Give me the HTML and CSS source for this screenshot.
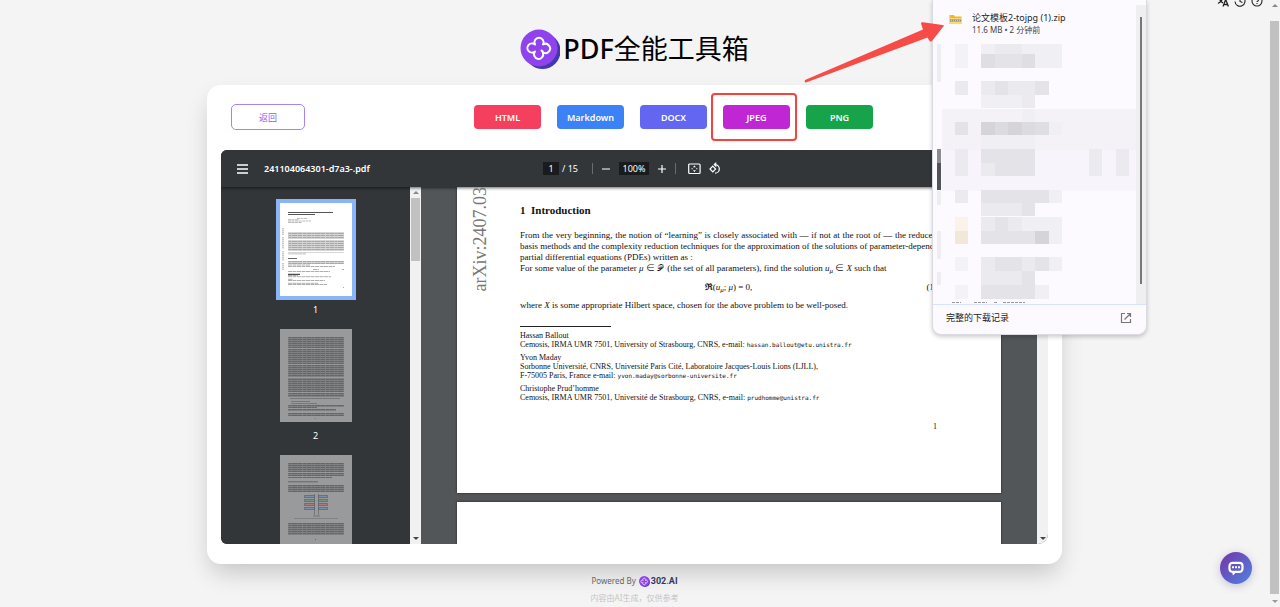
FILE: index.html
```html
<!DOCTYPE html>
<html lang="zh-CN">
<head>
<meta charset="utf-8">
<meta name="viewport" content="width=device-width, initial-scale=1">
<title>PDF全能工具箱</title>
<link rel="stylesheet" href="styles.css">
</head>
<body>
<svg class="defs" width="0" height="0" aria-hidden="true">
  <defs>
    <pattern id="rows" width="23" height="2" patternUnits="userSpaceOnUse">
      <rect width="23" height="2" fill="#000" opacity=".16"/>
      <path d="M0 .5h3m.5 0h5m.6 0h2m.5 0h6m.5 0h4" stroke="#000" stroke-opacity=".22"/>
    </pattern>
  </defs>
</svg>
<div class="page">
  <div class="content">
    <header class="header">
      <svg class="logo" viewBox="0 0 40 40" aria-hidden="true">
        <circle cx="22.500" cy="22" r="18" fill="#4339ac"/>
        <circle cx="19" cy="19" r="18.500" fill="#8f43ee"/>
        <path d="M15 15.500a4.600 4.600 0 1 1 8 0a4.600 4.600 0 1 1-.5 7.500M15 15.500a4.600 4.600 0 1 0 0 7a4.600 4.600 0 1 0 8 1.500c0-1-.5-2-1.500-2.500" fill="none" stroke="#fff" stroke-width="2" stroke-linecap="round" stroke-linejoin="round"/>
      </svg>
      <h1 class="title"><span class="title-latin">PDF</span>全能工具箱</h1>
    </header>

    <main class="card">
      <div class="actions">
        <button class="back" type="button">返回</button>
        <div class="formats">
          <button class="format format-html" type="button">HTML</button>
          <button class="format format-md" type="button">Markdown</button>
          <button class="format format-docx" type="button">DOCX</button>
          <button class="format format-jpeg" type="button">JPEG</button>
          <button class="format format-png" type="button">PNG</button>
        </div>
      </div>

      <section class="viewer">
        <div class="toolbar">
          <div class="file">
            <button class="tool" type="button" aria-label="菜单"><svg width="12" height="10" viewBox="0 0 12 10"><path d="M0 1h11M0 5h11M0 9h11" stroke="#fff" stroke-width="1.500"/></svg></button>
            <span class="filename">241104064301-d7a3-.pdf</span>
          </div>
          <div class="controls">
            <input class="field field-page" type="text" value="1" aria-label="页码"><span class="total">/ 15</span>
            <span class="divider"></span>
            <button class="tool" type="button" aria-label="缩小"><svg width="10" height="10" viewBox="0 0 10 10"><path d="M1 5h8" stroke="#fff" stroke-width="1.200"/></svg></button>
            <input class="field field-zoom" type="text" value="100%" aria-label="缩放">
            <button class="tool" type="button" aria-label="放大"><svg width="10" height="10" viewBox="0 0 10 10"><path d="M1 5h8M5 1v8" stroke="#fff" stroke-width="1.200"/></svg></button>
            <span class="divider divider-tight"></span>
            <button class="tool tool-fit" type="button" aria-label="适合页面"><svg width="13" height="12" viewBox="0 0 13 12"><rect x=".7" y="1" width="11.400" height="9.500" rx="1" fill="none" stroke="#fff" stroke-width="1.200"/><path d="M6.400 2.500l1.500 1.700H4.900zM6.400 9l1.500-1.700H4.900zM3.500 5.200h1.200v1.100H3.500zM8.200 5.200h1.200v1.100H8.200z" fill="#fff"/></svg></button>
            <button class="tool" type="button" aria-label="旋转"><svg width="13" height="13" viewBox="0 0 13 13" fill="none" stroke="#fff" stroke-width="1.200"><path d="M3.800 4.200L6.600 7 3.800 9.800 1 7z"/><path d="M6 2.600a4.300 4.300 0 1 1 0 8.600M7.300.6L5.300 2.600l2 2"/></svg></button>
          </div>
          <span></span>
        </div>

        <div class="panes">
          <div class="thumbs">
            <figure class="thumb">
              <svg class="sheet sheet-current" viewBox="0 0 72 93" aria-hidden="true">
                <g fill="#555"><rect x="8" y="9" width="45" height="1"/><rect x="8" y="11" width="27" height="1"/></g>
                <path d="M17 15.500h10M8 16.700h11M8 18h23M8 19.500h14" stroke="#aaa" stroke-width=".8" stroke-dasharray="3 .5"/>
                <g fill="url(#rows)"><rect x="8" y="29" width="56" height="7"/><rect x="8" y="37" width="56" height="11"/><rect x="8" y="49" width="56" height="1"/><rect x="8" y="50.500" width="18" height="1"/><rect x="8" y="58" width="56" height="3"/></g>
                <path d="M8 55.500h9" stroke="#666"/>
                <path d="M8 62h22M8 63.500h47M33 66.500h6M62 66.500h2M8 68.500h42M8 72.500h10M8 73.700h43M8 76.300h5M8 77.500h37M8 80.300h30M8 81.500h39M63 84.500h1" stroke="#999" stroke-width=".8" stroke-dasharray="4 .5"/>
                <path d="M8 71.300h12" stroke="#222" stroke-width="1"/>
                <path d="M3 25v7m0 2v12m0 2v10m0 2v7" stroke="#bbb" stroke-width="1.500" stroke-dasharray="1.500 .5"/>
              </svg>
              <figcaption class="thumb-label">1</figcaption>
            </figure>
            <figure class="thumb">
              <svg class="sheet sheet-dim" viewBox="0 0 72 93" aria-hidden="true">
                <g fill="url(#rows)"><rect x="8" y="8" width="56" height="11"/><rect x="8" y="20" width="56" height="15"/><rect x="8" y="36" width="56" height="12"/><rect x="8" y="49" width="56" height="14"/><rect x="8" y="64" width="56" height="4"/><rect x="8" y="76" width="56" height="2"/><rect x="8" y="78" width="29" height="1"/><rect x="8" y="80" width="48" height="2"/><rect x="8" y="84" width="56" height="3"/></g>
                <path d="M10 69.500h50M11 72.500h19M11 74.500h26M35 89.500h1" stroke="#777"/>
              </svg>
              <figcaption class="thumb-label">2</figcaption>
            </figure>
            <figure class="thumb">
              <svg class="sheet sheet-dim" viewBox="0 0 72 93" role="img" aria-label="第三页">
                <g fill="url(#rows)"><rect x="8" y="8" width="56" height="9"/><rect x="8" y="18" width="56" height="3"/><rect x="8" y="22" width="44" height="1"/><rect x="8" y="30" width="56" height="7"/><rect x="14" y="63" width="44" height="1"/><rect x="8" y="68" width="56" height="12"/></g>
                <path d="M8 26.800h30" stroke="#666"/>
                <g stroke="#5b6066" stroke-width=".7"><path d="M24.500 40.500h10v2h-10zM38.500 40.500h9v2h-9z" fill="#7d8fa8"/><path d="M24.500 44.500h10v2h-10zM38.500 44.500h9v2h-9z" fill="#7c9484"/><path d="M24.500 48.500h10v2h-10zM38.500 48.500h9v2h-9z" fill="#a67c80"/><path d="M24.500 52.500h10v2h-10zM38.500 52.500h9v2h-9z" fill="#7d8fa8"/><path d="M34.500 39v21M38.500 39v21M33 61h7" fill="none" stroke-width=".6"/></g>
                <path d="M35 84.500h1" stroke="#666"/>
              </svg>
            </figure>
          </div>
          <div class="scrollbar" aria-hidden="true"><span class="arrow arrow-up"></span><span class="bar bar-thumbs"></span><span class="arrow arrow-down"></span></div>

          <div class="document">
            <article class="paper">
              <p class="stamp">arXiv:2407.03</p>
              <div class="text">
                <h2 class="section">1&nbsp; Introduction</h2>
                <p class="line line-full">From the very beginning, the notion of “learning” is closely associated with — if not at the root of — the reduced</p>
                <p class="line line-full">basis methods and the complexity reduction techniques for the approximation of the solutions of parameter-dependant</p>
                <p class="line">partial differential equations (PDEs) written as :</p>
                <p class="line">For some value of the parameter <i>μ</i> ∈ <span class="script">𝒫</span> (the set of all parameters), find the solution <i>u<sub>μ</sub></i> ∈ <i>X</i> such that</p>
                <p class="equation"><span></span><span><b>ℜ</b>(<i>u<sub>μ</sub></i>; <i>μ</i>) = 0,</span><span class="number">(1)</span></p>
                <p class="line">where <i>X</i> is some appropriate Hilbert space, chosen for the above problem to be well-posed.</p>
                <hr class="rule">
                <p class="note">Hassan Ballout<br>Cemosis, IRMA UMR 7501, University of Strasbourg, CNRS, e-mail: <span class="mail">hassan.ballout@etu.unistra.fr</span></p>
                <p class="note">Yvon Maday<br>Sorbonne Université, CNRS, Université Paris Cité, Laboratoire Jacques-Louis Lions (LJLL),<br>F-75005 Paris, France e-mail: <span class="mail">yvon.maday@sorbonne-universite.fr</span></p>
                <p class="note">Christophe Prud’homme<br>Cemosis, IRMA UMR 7501, Université de Strasbourg, CNRS, e-mail: <span class="mail">prudhomme@unistra.fr</span></p>
                <p class="folio">1</p>
              </div>
            </article>
            <article class="paper paper-next"></article>
          </div>
          <div class="scrollbar" aria-hidden="true"><span class="arrow arrow-up"></span><span class="bar bar-doc"></span><span class="arrow arrow-down"></span></div>
        </div>
      </section>
    </main>

    <footer class="footer">
      <p class="powered">Powered By
        <a class="brand" href="#"><svg width="11" height="11" viewBox="0 0 40 40" aria-hidden="true"><circle cx="22" cy="22" r="18" fill="#4339ac"/><circle cx="19" cy="19" r="19" fill="#8f43ee"/><path d="M15 16a5 5 0 1 1 8 0a5 5 0 1 1 0 8a5 5 0 1 1-8 0a5 5 0 1 1 0-8" fill="none" stroke="#fff" stroke-width="2.500"/></svg>302<span class="dot">.</span>AI</a>
      </p>
      <p class="notice">内容由AI生成，仅供参考</p>
    </footer>
  </div>

  <div class="scrollbar scrollbar-page" aria-hidden="true"><span class="arrow arrow-up"></span><span class="bar bar-page"></span><span class="arrow arrow-down arrow-soft"></span></div>
</div>

<nav class="quick">
  <button class="quick-button" type="button" aria-label="语言"><svg width="12" height="12" viewBox="0 0 12 12" fill="none" stroke="#222" stroke-width="1.300"><path d="M1 2h6M4 .5V2M6 2C5.500 5 3 7.500 1 8.500M2.500 4c.8 2 2 3 3.500 4M6 11.500l2.700-7 2.700 7M7 9.500h3.500"/></svg></button>
  <button class="quick-button" type="button" aria-label="历史"><svg width="12" height="12" viewBox="0 0 12 12" fill="none" stroke="#222" stroke-width="1.100"><path d="M1.500 4A5 5 0 1 1 1 6.500M1 2v2.500h2.500M6 3v3.500l2.500 1"/></svg></button>
  <button class="quick-button" type="button" aria-label="帮助"><svg width="12" height="12" viewBox="0 0 12 12" fill="none" stroke="#222" stroke-width="1.100"><circle cx="6" cy="6" r="5"/><path d="M4.500 4.800a1.500 1.500 0 1 1 2 1.400c-.4.200-.5.400-.5.900M6 8v1"/></svg></button>
</nav>

<aside class="downloads">
  <div class="list">
    <div class="download">
      <svg class="zip" width="13" height="11" viewBox="0 0 13 11" aria-hidden="true"><path d="M.5 1h4.500l1 1.500h6.500V10H.5z" fill="#f2b632"/><path d="M.5 4h12v6H.5z" fill="#ffd866"/><path d="M1 5.500h11v2H1z" fill="#8a8a84"/><path d="M2 6.500h9" stroke="#ddd" stroke-width=".8" stroke-dasharray="1 1"/></svg>
      <div>
        <p class="download-name">论文模板2-tojpg (1).zip</p>
        <p class="download-meta">11.6 MB • 2 分钟前</p>
      </div>
    </div>
    <svg class="mosaic" width="200" height="260" viewBox="0 0 200 260" aria-hidden="true" shape-rendering="crispEdges">
      <path d="M5 65h195v41H5z" fill="#f4f2f7"/><path d="M5 106h195v41H5z" fill="#f7f4fc"/>
      <path d="M0 0h4v38H0zM0 147h4v14H0zM0 187h4v28H0zM0 228h4v13H0z" fill="#eeeef0"/>
      <path d="M0 105h4v14H0z" fill="#8b8c8f"/><path d="M0 119h4v27H0z" fill="#505357"/>
      <g fill="#f3f2f6"><path d="M18 0h13v24H18zM18 213h13v14H18zM18 241h13v14H18z"/></g>
      <g fill="#ebeaee"><path d="M18 37h13v14H18zM18 105h13v27H18zM152 105h13v27h-13zM179 105h13v27h-13zM18 146h13v13H18z"/></g>
      <path d="M18 78h13v13H18z" fill="#e3e3e6"/>
      <path d="M18 173h13v14H18z" fill="#fbf3e9"/><path d="M18 187h13v13H18z" fill="#f2e8da"/>
      <g transform="translate(-5 0)">
        <path d="M49 0h14v10H49zM90 0h13v10H90zM103 0h14v24h-14zM117 0h13v24h-13zM49 51h54v13H49zM90 65h13v13H90zM117 78h13v13h-13zM117 146h13v13h-13zM90 173h40v14H90zM117 187h13v13h-13zM117 213h13v14h-13zM103 241h14v14h-14zM49 91h54v14H49z" fill="#f0eff3"/>
        <path d="M63 0h27v10H63zM90 51h13v13H90zM49 37h14v14H49zM76 37h27v14H76zM49 119h14v13H49zM49 159h41v13H49zM49 173h14v14H49zM76 173h14v14H76zM49 213h14v14H49zM90 213h13v14H90zM49 227h41v14H49z" fill="#ebeaee"/>
        <path d="M63 10h14v14H63zM63 37h13v14H63zM103 37h14v14h-14zM76 10h27v14H76zM49 10h14v14H49zM49 105h14v14H49zM63 105h40v27H63zM49 146h68v13H49zM90 159h13v13H90zM63 173h13v14H63zM49 187h54v13H49zM63 213h27v14H63zM103 213h14v14h-14zM90 227h13v14H90zM49 241h54v14H49z" fill="#e4e3e7"/>
        <path d="M103 78h14v13h-14zM49 10h14v14H49zM90 10h13v14H90z" fill="#dfdee2"/>
        <path d="M49 78h14v13H49zM76 78h14v13H76zM103 187h14v13h-14z" fill="#d5d4d9"/><path d="M63 78h13v13H63zM90 78h13v13H90z" fill="#dbdbe0"/>
      </g>
      <path d="M15 258h9m13 0h13m7 0h4m5 0h22" stroke="#999" stroke-dasharray="3 1"/>
    </svg>
    <span class="list-bar"></span>
  </div>
  <div class="downloads-footer">
    <a class="all" href="#">完整的下载记录</a>
    <svg width="12" height="12" viewBox="0 0 12 12" fill="none" stroke="#777" stroke-width="1.200" aria-hidden="true"><path d="M5 1.500H1.500v9h9V7M7 1.500h3.500V5M10.500 1.500L4.500 7.500"/></svg>
  </div>
</aside>

<svg class="pointer" width="144" height="64" viewBox="0 0 144 64" aria-hidden="true"><path d="M4 60L122 9.500 120 3.500Q120 2 122 2.300L141.500 5Q144 5.500 142 7L131 21Q129.500 23 128 20L126.500 17.500 5 62.500Q3 62.500 4 60z" fill="#f64b46"/></svg>

<button class="chat" type="button" aria-label="客服"><svg width="16" height="15" viewBox="0 0 16 15" aria-hidden="true"><path d="M4.500 1.800h7a3 3 0 0 1 3 3v3a3 3 0 0 1-3 3H7l-1.500 1.600-.5-1.600h-.5a3 3 0 0 1-3-3v-3a3 3 0 0 1 3-3z" fill="none" stroke="#fff" stroke-width="2.200"/><path d="M4 6.300h2m1 0h2m1 0h2" stroke="#fff" stroke-width="2"/></svg></button>
</body>
</html>
```

FILE: styles.css
```css
* { box-sizing: border-box; }
body {
  margin: 0;
  background: #f4f4f4;
  color: #000;
  font-family: "Noto Sans", "Noto Sans CJK SC", sans-serif;
  font-size: 9px;
}
h1, h2, p, figure { margin: 0; }
button, input { font: inherit; padding: 0; border: 0; }
button { cursor: pointer; }
svg { display: block; flex: none; }
.defs { position: absolute; }

.page { display: grid; grid-template-columns: minmax(0, 1fr) 11px; min-height: 100vh; }
.content { display: flex; flex-direction: column; align-items: center; }

.header { display: flex; align-items: center; gap: 3px; height: 85px; padding-top: 13px; }
.logo { width: 40px; height: 40px; }
.title { font-size: 27px; font-weight: 400; line-height: 40px; }
.title-latin { font-weight: 500; }

.card {
  width: 100%;
  max-width: 855px;
  padding: 0 14px 20px;
  border-radius: 14px;
  background: #fff;
  box-shadow: 0 12px 24px -4px rgba(0, 0, 0, .2);
}
.actions { display: flex; align-items: center; height: 65px; padding: 0 6px 1px 10px; }
.back {
  width: 74px;
  height: 26px;
  border: 1px solid #a684f8;
  border-radius: 5px;
  background: #fff;
  color: #8b5cf6;
}
.formats { flex: 1; display: flex; justify-content: center; gap: 16px; }
.format {
  position: relative;
  width: 67px;
  height: 24px;
  border-radius: 4px;
  color: #fff;
  font-weight: 600;
}
.format-html { background: #f43f5e; }
.format-md { background: #3b82f6; }
.format-docx { background: #6366f1; }
.format-jpeg { background: #c026d3; }
.format-png { background: #16a34a; }
.format-jpeg::after {
  content: "";
  position: absolute;
  inset: -12px -7px -12px -12px;
  border: 2px solid #f6413c;
  border-radius: 4px;
}

.viewer {
  display: flex;
  flex-direction: column;
  height: calc(100vh - 213px);
  min-height: 300px;
  overflow: hidden;
  border-radius: 6px 6px 10px 6px;
  background: #525659;
}
.toolbar {
  display: grid;
  grid-template-columns: 1fr auto 1fr;
  align-items: center;
  flex: none;
  height: 37px;
  padding: 0 20px 0 16px;
  background: #323639;
  box-shadow: 0 1px 3px rgba(0, 0, 0, .6);
  color: #fff;
  position: relative;
}
.file { display: flex; align-items: center; gap: 15px; }
.filename { font-weight: 600; }
.tool { background: none; }
.controls { display: flex; align-items: center; }
.field { height: 13px; background: #191b1c; color: #fff; text-align: center; }
.field-page { width: 16px; }
.field-zoom { width: 30px; margin: 0 8px; }
.total { margin-left: 3px; }
.divider { width: 1px; height: 11px; margin: 0 8px 0 14px; background: #6a6d70; }
.divider-tight { margin: 0 12px 0 8px; }
.tool-fit { margin-right: 8px; }

.panes { flex: 1; display: flex; min-height: 0; }
.thumbs {
  flex: 0 0 189px;
  display: flex;
  flex-direction: column;
  align-items: center;
  overflow: hidden;
  padding-top: 12px;
  background: #323639;
}
.thumb { display: flex; flex-direction: column; align-items: center; }
.sheet { box-sizing: content-box; width: 72px; height: 93px; background: #fff; }
.sheet-current { border: 4px solid #8ab4f8; }
.sheet-dim { background: #999a9c; }
.thumb-label { height: 33px; padding-top: 8px; color: #fff; line-height: 12px; }
.thumb:first-child .thumb-label { height: 29px; padding-top: 4px; }

.scrollbar {
  flex: 0 0 11px;
  display: flex;
  flex-direction: column;
  align-items: center;
  padding: 4px 0;
  background: #f1f1f1;
}
.arrow { border: 3px solid transparent; }
.arrow-up { border-top: 0; border-bottom: 3px solid #888; }
.arrow-down { margin-top: auto; border-bottom: 0; border-top: 3px solid #444; }
.arrow-soft { border-top-color: #999; }
.bar { width: 9px; margin-top: 4px; background: #c1c1c1; }
.bar-thumbs { height: 63px; }
.bar-doc { height: 34px; }
.scrollbar-page { background: #f4f4f4; height: 100vh; position: sticky; top: 0; }
.bar-page { flex: 1; margin: 14px 0 6px; }

.document { flex: 1; min-width: 0; overflow: hidden; padding: 0 36px; }
.paper {
  display: grid;
  grid-template-columns: 63px minmax(0, 417px);
  height: 306px;
  margin-bottom: 9px;
  background: #fff;
  box-shadow: 0 0 2px #222;
  font-family: "Liberation Serif", serif;
}
.stamp {
  justify-self: start;
  align-self: start;
  margin-left: 13px;
  writing-mode: vertical-rl;
  transform: rotate(180deg);
  color: #777;
  font-size: 18px;
  line-height: 20px;
  white-space: nowrap;
}
.text { padding-top: 17px; color: #111; }
.section { margin-bottom: 13px; font-size: 11px; line-height: 13px; }
.line { font-size: 9px; line-height: 11px; white-space: nowrap; }
.line-full { text-align-last: justify; }
.line sub, .equation sub { font-size: 7px; line-height: 1px; vertical-align: -2px; }
.script { font-size: 8px; margin-right: 2px; }
.equation {
  display: grid;
  grid-template-columns: 1fr auto 1fr;
  margin: 7px 0;
  font-size: 9px;
  line-height: 12px;
}
.number { text-align: right; }
.rule { width: 91px; height: 1px; margin: 15px 0 4px; border: 0; background: #222; }
.note { margin-bottom: 4px; font-size: 8px; line-height: 9px; white-space: nowrap; }
.mail { font-family: "DejaVu Sans Mono", monospace; font-size: 6px; line-height: 1px; }
.folio { margin-top: 20px; font-size: 8px; line-height: 9px; text-align: right; }

.footer { padding-top: 10px; text-align: center; }
.powered { display: flex; align-items: center; justify-content: center; gap: 3px; color: #666; font-size: 8px; line-height: 14px; }
.brand { display: flex; align-items: center; color: #2f3a5f; font: 700 9px/14px Roboto, sans-serif; text-decoration: none; }
.brand svg { margin-right: 1px; }
.dot { color: #8f43ee; }
.notice { margin-top: 4px; color: #c4c4c4; font-size: 8px; line-height: 12px; }

.quick { position: absolute; top: -5px; right: 17px; display: flex; gap: 5px; }
.quick-button { background: none; }

.downloads {
  position: absolute;
  top: 0;
  right: 133px;
  width: 215px;
  overflow: hidden;
  border: 1px solid #d9dae2;
  border-top: 0;
  border-radius: 0 0 9px 9px;
  background: #fcfaff;
  box-shadow: 0 2px 4px rgba(0, 0, 0, .2);
}
.list { position: relative; height: 304px; overflow: hidden; }
.download { display: flex; gap: 10px; height: 44px; padding: 11px 0 0 16px; color: #1f1f23; }
.zip { margin-top: 3px; }
.download-name { font-size: 9px; line-height: 13px; }
.download-meta { color: #444; font-size: 8px; line-height: 11px; }
.mosaic { margin-left: 4px; }
.list-bar {
  position: absolute;
  top: 5px;
  right: 0;
  width: 10px;
  height: 299px;
  background: linear-gradient(#777, #777) 4px 12px / 2px 267px no-repeat #efeff1;
}
.downloads-footer {
  display: flex;
  align-items: center;
  justify-content: space-between;
  height: 30px;
  padding: 0 14px 4px 13px;
  border-top: 1px solid #d6e3fb;
}
.all { color: #222; text-decoration: none; }

.pointer { position: absolute; top: 20px; right: 335px; }

.chat {
  position: fixed;
  right: 28px;
  bottom: 23px;
  display: grid;
  place-items: center;
  width: 32px;
  height: 32px;
  border-radius: 50%;
  background: linear-gradient(135deg, #7534a8, #4f83e2);
  box-shadow: 0 2px 8px rgba(80, 80, 160, .3);
}
```
